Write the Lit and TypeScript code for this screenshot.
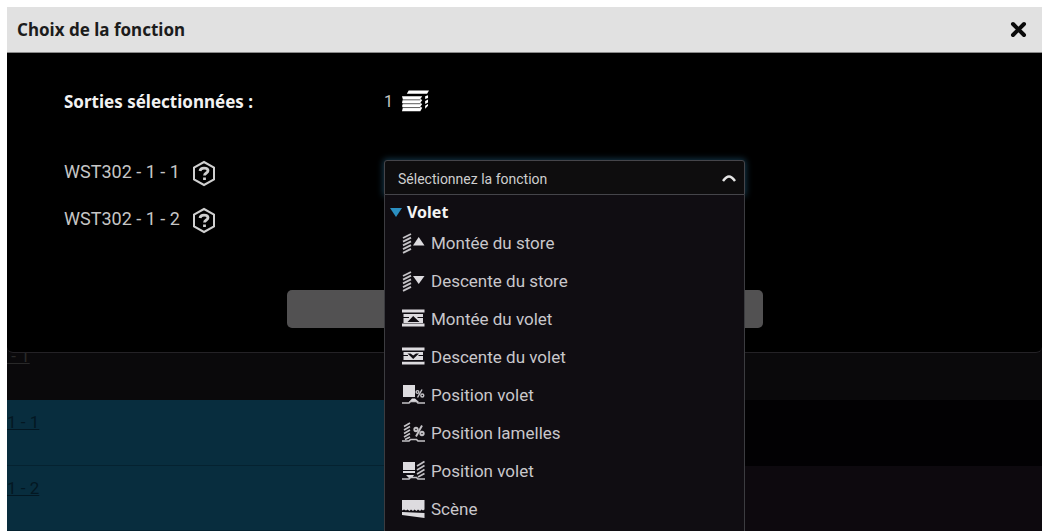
import { LitElement, html, css, svg, nothing, TemplateResult } from 'lit';
import { customElement, property, state } from 'lit/decorators.js';

/* Pieces shared by the function pictograms, drawn on a 23 x 22 grid. */
const slats = svg`<path d="M1 6l8-4M1 9.700l8-4M1 13.400l8-4M1 17.100l8-4M1 20.800l8-4" stroke-width="1.900"/>`;
const hand = svg`<path d="M0 19h7l1.500-1.500h6L16 19h7" stroke-width="1.700"/>`;

const icons: Record<string, TemplateResult> = {
  slatsUp: svg`${slats}<path class="fill" d="M11 13.500L16.700 5 22.500 13.500z"/>`,
  slatsDown: svg`${slats}<path class="fill" d="M11 6h11.500L16.700 14z"/>`,
  shutterUp: svg`<path class="fill" fill-rule="evenodd" d="M0 1.500h22.500v3H0zM1.500 6h19.500v9H1.500zM11.200 8L5.500 14h12zM0 15.500h22.500v3H0z"/><path class="cut" d="M0 9.500h7M15.500 9.500h7"/>`,
  shutterDown: svg`<path class="fill" fill-rule="evenodd" d="M0 1.500h22.500v3H0zM1.500 6h19.500v8H1.500zM5.500 7.500h3l2.700 2 2.800-2h3L11.200 13zM0 15.500h22.500v3H0z"/><path class="cut" d="M0 9.500h6M16.500 9.500h6M0 15h22.500"/>`,
  shutterPos: svg`<path class="fill" d="M1 1h12v12H1zM7 18l3-3.500h3l4 3.500z"/><g stroke-width="1.400"><circle cx="15.500" cy="8" r="1.400"/><circle cx="20.300" cy="11.500" r="1.500"/><path d="M20 5.500l-4.500 8"/></g>${hand}`,
  slatPos: svg`<path d="M2 4.500l6-3.500M2 8l6-3.500M2 11.500l6-3.500M2 15l6-3.500M3 17.500l5-2.500" stroke-width="1.700"/><g stroke-width="1.900"><circle cx="14" cy="7.500" r="1.700"/><circle cx="20" cy="11.500" r="1.700"/><path d="M20 3.500l-6 11"/></g>${hand}`,
  shutterSlat: svg`<path class="fill" d="M1 2h12v11H1zM4 15h8l-2 3H7z"/><path class="cut" d="M1 10.500h12"/><path d="M15 6l7.500-4.500M15 10l7.500-4.500M15 14l7.500-4.500M16 17l6.500-3.500" stroke-width="1.700"/>${hand}`,
  scene: svg`<path class="fill" d="M0 2h22.500v9.500l-1.500 1-1.500-1-1.500 1.500-2-1.500-1.500 1.500-2-1.500-1.500 1.500-2-1.500-1.500 1.500-2-1.500-1.500 1-2-1-2 1zM0 14l22.500 1v5L0 17z"/>`,
  blind: svg`<path class="fill" d="M8 1h21l-2 3.500H6zM1 7h21l-2 3 2 1-2 3 2 1-2 3 2 1-2 3.500H1l1-4-1-1 1-3-1-1 1-3zM25 7l3-1v3l-3 1zM25 12l3-1.500v3L25 15zM25 17l3-2v2l-3 3z"/><path class="gap" d="M2 10.800h18M2 14.800h18M2 18.800h18"/>`,
};

interface FunctionItem {
  icon: string;
  label: string;
}

const functions: FunctionItem[] = [
  { icon: 'slatsUp', label: 'Montée du store' },
  { icon: 'slatsDown', label: 'Descente du store' },
  { icon: 'shutterUp', label: 'Montée du volet' },
  { icon: 'shutterDown', label: 'Descente du volet' },
  { icon: 'shutterPos', label: 'Position volet' },
  { icon: 'slatPos', label: 'Position lamelles' },
  { icon: 'shutterSlat', label: 'Position volet' },
  { icon: 'scene', label: 'Scène' },
];

@customElement('fn-icon')
class FnIcon extends LitElement {
  @property() name = '';
  static styles = css`
    :host { display: flex; }
    svg { width: 23px; height: 22px; fill: none; stroke: #c4c2c6; }
    svg.large { width: 28px; height: 26px; }
    .fill { fill: #dddbdf; stroke: none; }
    .large .fill { fill: #fff; }
    .cut { stroke: #100d12; stroke-width: 1; }
    .gap { stroke: #555; stroke-width: 1; }
  `;
  render() {
    const large = this.name === 'blind';
    return html`<svg class=${large ? 'large' : ''} viewBox=${large ? '0 0 29 24' : '0 0 23 22'} aria-hidden="true">${icons[this.name]}</svg>`;
  }
}

@customElement('function-picker')
class FunctionPicker extends LitElement {
  @state() private open = true;
  @state() private value = '';

  static styles = css`
    :host { display: block; position: relative; }
    .box {
      display: flex; align-items: center; height: 35px; box-sizing: border-box;
      border: 1px solid #45454a; border-radius: 3px 3px 0 0; background: #0e0d0e;
      box-shadow: 0 0 6px 1px #14384c;
    }
    select {
      flex: 1; align-self: stretch; min-width: 0; padding: 2px 36px 0 13px; appearance: none;
      border: 0; outline: 0; background: transparent; color: #cfcfcf;
      font: 14px Roboto, sans-serif;
    }
    .chevron {
      width: 14px; height: 8px; margin: 0 8px 0 -22px; pointer-events: none;
      fill: none; stroke: #e4e4e4; stroke-width: 2.500;
    }
    .menu {
      position: absolute; z-index: 2; top: 35px; left: 0; right: 0; box-sizing: border-box;
      padding: 5px 0 24px; background: #100d12; border: 1px solid #3c3c40; border-top: 0;
    }
    .group {
      display: flex; align-items: center; gap: 5px; height: 24px; padding-left: 5px;
      color: #f4f4f4; font: bold 16px 'Noto Sans', sans-serif;
    }
    .arrow { width: 12px; height: 9px; fill: #2b8fc0; }
    .option {
      display: flex; align-items: center; gap: 6px; width: 100%; height: 38px; padding: 0 0 0 17px;
      border: 0; background: transparent; color: #c9c7cb; font: 17px Roboto, sans-serif; text-align: left;
    }
    .option:hover { background: #1f2a31; }
  `;

  private toggle(e: Event) {
    e.preventDefault();
    this.open = !this.open;
  }
  private choose(i: number) {
    this.value = String(i);
    this.open = false;
  }
  render() {
    return html`
      <div class="box">
        <select aria-label="Sélectionnez la fonction" .value=${this.value} @mousedown=${this.toggle}>
          <option value="">Sélectionnez la fonction</option>
          ${functions.map((f, i) => html`<option value=${i}>${f.label}</option>`)}
        </select>
        <svg class="chevron" viewBox="0 0 14 8"><path d="M1 7c3-4 5-4.500 6-4.500S10 3 13 7"/></svg>
      </div>
      ${this.open
        ? html`<div class="menu" role="listbox" aria-label="Volet">
            <div class="group"><svg class="arrow" viewBox="0 0 12 9"><path d="M0 0h12L6 9z"/></svg>Volet</div>
            ${functions.map((f, i) => html`<button class="option" role="option" @click=${() => this.choose(i)}>
              <fn-icon name=${f.icon}></fn-icon><span>${f.label}</span>
            </button>`)}
          </div>`
        : nothing}
    `;
  }
}

@customElement('app-root')
class AppRoot extends LitElement {
  static styles = css`
    :host {
      display: block; box-sizing: border-box; height: 100vh; padding: 7px 3px 0 7px;
      overflow: hidden; background: #fff; font: 17px Roboto, sans-serif;
    }
    .screen { position: relative; height: 100%; background: #020103; }
    .backdrop { display: grid; grid-template-columns: 1fr 1fr; height: 100%; grid-template-rows: 1fr 66px 65px; }
    .cell { display: flex; align-items: flex-start; box-sizing: border-box; padding-top: 12px; }
    .head { align-items: flex-end; background: #0a090b; padding-bottom: 34px; }
    .on { background: #082d3e; border-bottom: 1px solid #052230; }
    .dim { background: #0d090e; }
    .cell a { color: #031722; text-decoration: underline; }
    .head a { color: #292929; }
    .dialog {
      position: absolute; top: 0; left: 0; right: 0;
      background: #000; border-bottom: 1px solid #242226; border-radius: 0 0 6px 6px;
    }
    header {
      display: flex; align-items: center; justify-content: space-between; height: 46px; box-sizing: border-box;
      padding: 0 15px 0 10px; background: #e1e1e1; border-bottom: 1px solid #8a8a8a;
    }
    h1 { margin: 0; color: #1c1c1c; font: bold 17px 'Noto Sans', sans-serif; }
    .close { display: flex; padding: 0; border: 0; background: transparent; }
    .close svg { width: 17px; height: 17px; stroke: #0a0a0a; stroke-width: 4; stroke-linecap: round; }
    .body { padding: 30px 57px 24px; color: #c6c6c6; }
    .grid { display: grid; grid-template-columns: 320px 361px; row-gap: 31px; }
    .line { display: flex; align-items: center; height: 36px; }
    h2 { margin: 0; color: #f2f2f2; font: bold 17px 'Noto Sans', sans-serif; }
    .count { gap: 8px; font-size: 16px; }
    .output { gap: 12px; height: 47px; font-size: 18px; }
    .output span { padding-bottom: 4px; }
    .help { display: flex; padding: 0; border: 0; background: transparent; }
    .help svg { width: 24px; height: 27px; fill: none; stroke: #d0d0d0; stroke-width: 2; }
    .help .mark { stroke-width: 2.800; }
    function-picker { margin-top: 10px; }
    .save {
      display: block; width: 476px; height: 38px; margin: 46px auto 0; border: 0; border-radius: 5px;
      background: #525152;
    }
  `;

  private output(name: string) {
    return html`<div class="line output"><span>${name}</span>
      <button class="help" aria-label="Aide"><svg viewBox="0 0 24 27">
        <path d="M12 2l10 5.500v12L12 25 2 19.500v-12z"/>
        <path class="mark" d="M8 11c.3-2 2-2.800 4-2.800 2.400 0 4 .9 4 2.600 0 2.200-3.500 2.200-3.500 4.700M12.500 17.500v2.500"/>
      </svg></button></div>`;
  }

  render() {
    return html`
      <div class="screen">
        <div class="backdrop">
          <div class="cell head"><a href="#">&nbsp;- 1</a></div><div class="cell head"></div>
          <div class="cell on"><a href="#">1 - 1</a></div><div class="cell"></div>
          <div class="cell on"><a href="#">1 - 2</a></div><div class="cell dim"></div>
        </div>
        <section class="dialog" role="dialog" aria-labelledby="title">
          <header>
            <h1 id="title">Choix de la fonction</h1>
            <button class="close" aria-label="Fermer"><svg viewBox="0 0 17 17"><path d="M3 3l11 11M14 3L3 14"/></svg></button>
          </header>
          <div class="body">
            <div class="grid">
              <div class="line"><h2>Sorties sélectionnées :</h2></div>
              <div class="line count">1 <fn-icon name="blind"></fn-icon></div>
              <div>${this.output('WST302 - 1 - 1')}${this.output('WST302 - 1 - 2')}</div>
              <function-picker></function-picker>
            </div>
            <button class="save" aria-label="Enregistrer"></button>
          </div>
        </section>
      </div>
    `;
  }
}
